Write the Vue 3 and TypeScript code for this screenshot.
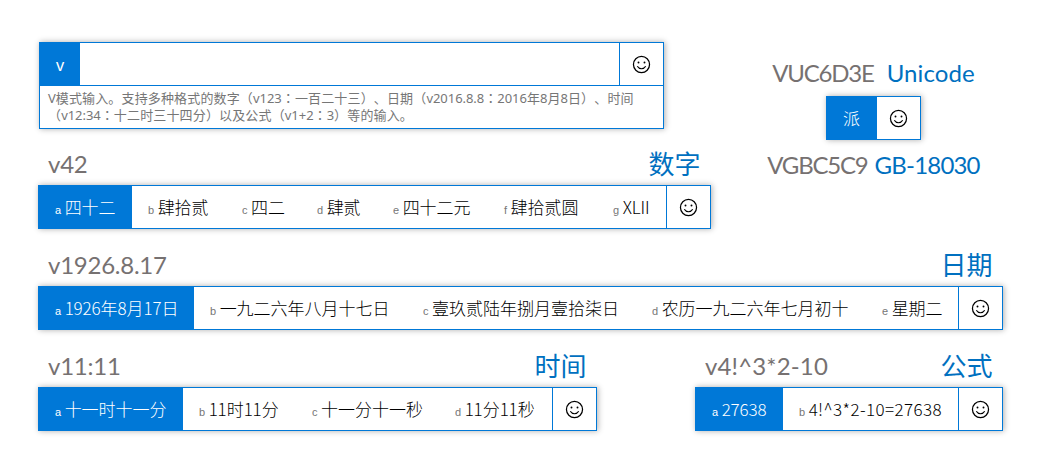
<script setup lang="ts">
import { defineComponent, h, type PropType } from 'vue'

interface Candidate {
  key?: string
  text: string
  width: number
  loose?: boolean
}

/* Splits mixed text so Latin runs and centred colons can be styled apart from Han characters. */
const runClass = (run: string) => (run === '：' ? 'colon' : /^[\x20-\x7e]/.test(run) ? 'latin' : 'han')
const MixedText = (props: { text: string }) =>
  h(
    'span',
    { class: 'mixed' },
    (props.text.match(/：|[\x20-\x7e]+|[^\x20-\x7e：]+/g) ?? []).map((run) =>
      h('span', { class: runClass(run) }, run),
    ),
  )
MixedText.props = ['text']

const Smiley = () =>
  h('div', { class: 'smiley' }, [
    h('svg', { width: 19, height: 19, viewBox: '0 0 19 19' }, [
      h('circle', { cx: 9.5, cy: 9.5, r: 8.05, fill: 'none', stroke: '#000', 'stroke-width': 1.25 }),
      h('circle', { cx: 6.5, cy: 7.5, r: 0.95 }),
      h('circle', { cx: 12.5, cy: 7.5, r: 0.95 }),
      h('path', { d: 'M5.3 11.3C7.2 14.5 11.8 14.5 13.7 11.3', fill: 'none', stroke: '#000', 'stroke-width': 1.15 }),
    ]),
  ])

const CandidateBar = defineComponent({
  props: { items: { type: Array as PropType<Candidate[]>, required: true } },
  setup(props) {
    return () =>
      h('div', { class: 'bar' }, [
        ...props.items.map((c, i) =>
          h('div', { class: ['cell', { active: i === 0, loose: c.loose }], style: { width: c.width + 'px' } }, [
            c.key ? h('span', { class: 'key' }, c.key) : null,
            h(MixedText, { text: c.text }),
          ]),
        ),
        h(Smiley),
      ])
  },
})

const numbers: Candidate[] = [
  { key: 'a', text: '四十二', width: 93 },
  { key: 'b', text: '肆拾贰', width: 94 },
  { key: 'c', text: '四二', width: 75 },
  { key: 'd', text: '肆贰', width: 76 },
  { key: 'e', text: '四十二元', width: 111 },
  { key: 'f', text: '肆拾贰圆', width: 109 },
  { key: 'g', text: 'XLII', width: 69 },
]
const dates: Candidate[] = [
  { key: 'a', text: '1926年8月17日', width: 155 },
  { key: 'b', text: '一九二六年八月十七日', width: 213 },
  { key: 'c', text: '壹玖贰陆年捌月壹拾柒日', width: 229 },
  { key: 'd', text: '农历一九二六年七月初十', width: 230 },
  { key: 'e', text: '星期二', width: 92 },
]
const times: Candidate[] = [
  { key: 'a', text: '十一时十一分', width: 144 },
  { key: 'b', text: '11时11分', width: 113 },
  { key: 'c', text: '十一分十一秒', width: 143 },
  { key: 'd', text: '11分11秒', width: 113 },
]
const formula: Candidate[] = [
  { key: 'a', text: '27638', width: 87 },
  { key: 'b', text: '4!^3*2-10=27638', width: 175, loose: true },
]
const unicode: Candidate[] = [{ text: '派', width: 49 }]

const help = [
  'V模式输入。支持多种格式的数字（v123：一百二十三）、日期（v2016.8.8：2016年8月8日）、时间',
  '（v12:34：十二时三十四分）以及公式（v1+2：3）等的输入。',
]
</script>

<template>
  <main class="page">
    <div class="top">
      <div class="left">
        <section class="panel">
          <div class="input">
            <div class="mode">v</div>
            <div class="blank"></div>
            <Smiley />
          </div>
          <div class="help">
            <p v-for="line in help" :key="line"><MixedText :text="line" /></p>
          </div>
        </section>
        <section class="group numbers">
          <header><span class="code">v42</span><span class="name">数字</span></header>
          <CandidateBar :items="numbers" />
        </section>
      </div>
      <div class="right">
        <div class="caption first"><span class="code">VUC6D3E</span><span class="standard">Unicode</span></div>
        <CandidateBar :items="unicode" />
        <div class="caption second"><span class="code">VGBC5C9</span><span class="standard">GB-18030</span></div>
      </div>
    </div>
    <section class="group dates">
      <header><span class="code">v1926.8.17</span><span class="name">日期</span></header>
      <CandidateBar :items="dates" />
    </section>
    <div class="bottom">
      <section class="group">
        <header><span class="code">v11:11</span><span class="name">时间</span></header>
        <CandidateBar :items="times" />
      </section>
      <section class="group">
        <header><span class="code expression">v4!^3*2-10</span><span class="name">公式</span></header>
        <CandidateBar :items="formula" />
      </section>
    </div>
  </main>
</template>

<style scoped>
.page {
  box-sizing: border-box;
  width: 1042px;
  height: 471px;
  padding: 42px 39px 0 38px;
  overflow: hidden;
  background: #fff;
  font-family: 'Noto Sans CJK SC', sans-serif;
  white-space: nowrap;
}
.top {
  display: flex;
  height: 187px;
}
.left {
  flex: none;
  width: 673px;
}
.panel {
  box-sizing: border-box;
  width: 625px;
  height: 87px;
  margin-left: 1px;
  border: 1px solid #0078d7;
  background: #fff;
  box-shadow: 1px 0 6px rgba(0, 0, 0, 0.32);
}
.input {
  display: flex;
  height: 42px;
  border-bottom: 1px solid #0078d7;
}
.mode {
  width: 40px;
  background: #0078d7;
  color: #fff;
  font: 16px/45px 'Noto Sans', sans-serif;
  text-align: center;
}
.blank {
  flex: 1;
}
.page :deep(.smiley) {
  display: flex;
  align-items: center;
  justify-content: center;
  box-sizing: border-box;
  width: 44px;
  padding: 1px 1px 0 0;
  border-left: 1px solid #0078d7;
}
.page :deep(.bar .smiley) {
  padding-top: 0;
}
.help {
  padding: 3px 8px 0;
  color: #767676;
  font: 13px/17px 'Noto Sans', 'Noto Sans CJK SC', sans-serif;
  letter-spacing: 0.15px;
  text-spacing-trim: space-all;
}
.help p {
  margin: 0;
  height: 17px;
}
.help :deep(.latin) {
  letter-spacing: -0.05px;
}
.help :deep(.colon) {
  font-family: 'Noto Sans CJK TC', sans-serif;
}
.group header {
  display: flex;
  justify-content: space-between;
  box-sizing: border-box;
  height: 42px;
  padding: 0 10.5px 0 10px;
  line-height: 42px;
}
.numbers {
  margin-top: 14px;
}
.dates {
  margin-top: 15px;
}
.code,
.standard {
  font-family: Lato, sans-serif;
  font-size: 24px;
  color: #767171;
  letter-spacing: -0.25px;
}
.standard,
.name {
  color: #0070c0;
}
.name {
  font-size: 26px;
  line-height: 40px;
}
.expression {
  letter-spacing: 0.15px;
}
.page :deep(.bar) {
  display: flex;
  box-sizing: border-box;
  width: max-content;
  height: 44px;
  border: 1px solid #0078d7;
  background: #fff;
  box-shadow: 1px 0 6px rgba(0, 0, 0, 0.32);
}
.page :deep(.cell) {
  display: flex;
  align-items: baseline;
  box-sizing: border-box;
  padding-left: 16px;
  color: #000;
  font-size: 17px;
  font-weight: 300;
  line-height: 41px;
}
.page :deep(.cell .latin) {
  letter-spacing: -0.1px;
}
.page :deep(.loose .latin) {
  letter-spacing: 0.4px;
}
.page :deep(.key) {
  margin-right: 3.5px;
  color: #767676;
  font: 11px 'Liberation Sans', sans-serif;
}
.page :deep(.active),
.page :deep(.active .key) {
  color: #fff;
}
.page :deep(.active) {
  background: #0078d7;
}
.right {
  display: flex;
  flex: none;
  flex-direction: column;
  align-items: center;
  width: 291px;
  margin-left: 17px;
}
.caption {
  display: flex;
  line-height: 30px;
}
.caption .code {
  letter-spacing: -1.2px;
}
.first {
  gap: 13px;
  height: 54px;
  padding-top: 16px;
  box-sizing: border-box;
}
.first .standard {
  letter-spacing: 0.1px;
}
.second {
  gap: 7px;
  margin-top: 10px;
}
.second .standard {
  letter-spacing: -0.8px;
}
.bottom {
  display: flex;
  justify-content: space-between;
  margin-top: 15px;
}
</style>
